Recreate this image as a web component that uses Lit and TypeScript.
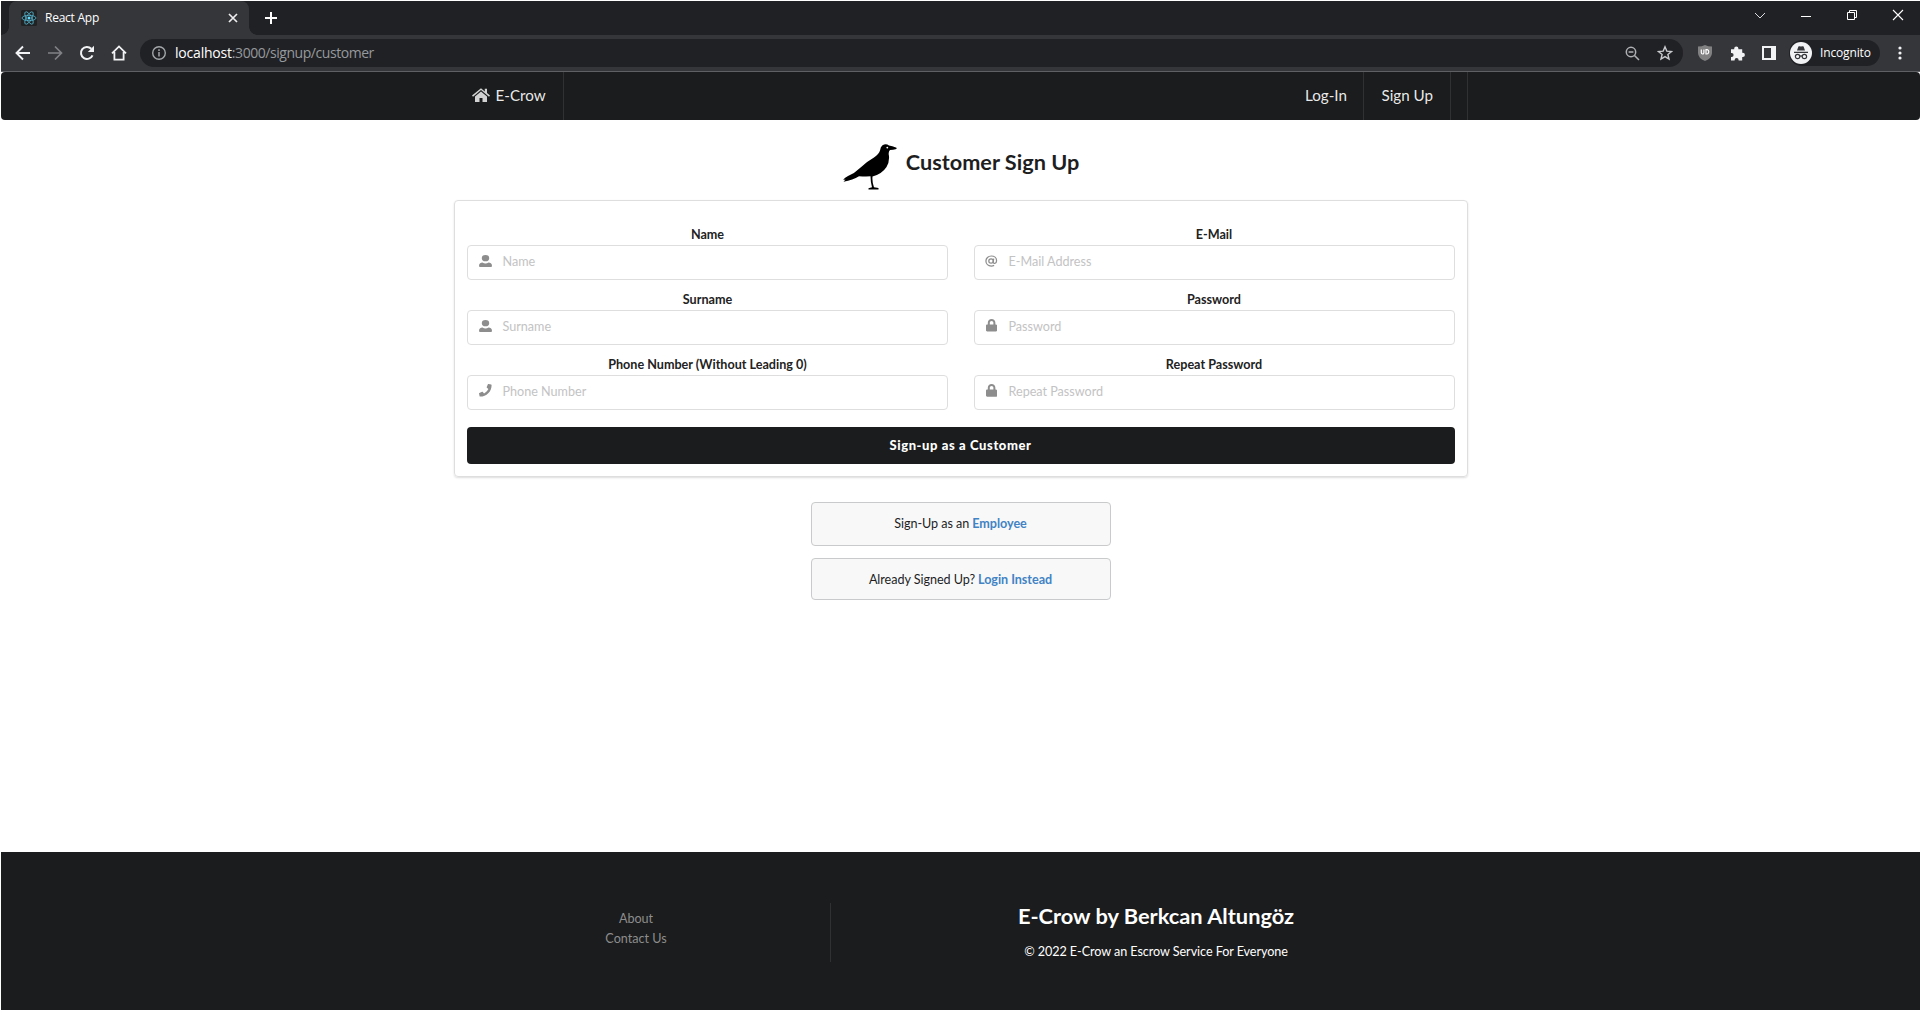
import { LitElement, html, svg, css } from "lit";
import { customElement } from "lit/decorators.js";

const USER = svg`<path d="M96 128a128 128 0 1 0 256 0A128 128 0 1 0 96 128zM0 448q0-80 40-112q30-26 80-32q50 38 104 38t104-38q50 6 80 32q40 32 40 112q0 42-38 42H38q-38 0-38-42z"/>`;
const PHONE = svg`<path d="M493.4 24.6l-104-24c-11.3-2.6-22.9 3.3-27.5 13.9l-48 112c-4.2 9.8-1.4 21.3 6.9 28l60.6 49.6c-36 76.7-98.9 140.5-177.2 177.2l-49.6-60.6c-6.8-8.3-18.2-11.1-28-6.9l-112 48C3.9 366.5-2 378.1.6 389.4l24 104C27.1 504.2 36.7 512 48 512c256.1 0 464-207.5 464-464 0-11.2-7.7-20.9-18.6-23.4z"/>`;
const LOCK = svg`<path d="M400 224h-24v-72C376 68.2 307.8 0 224 0S72 68.2 72 152v72H48c-26.5 0-48 21.5-48 48v192c0 26.500 21.500 48 48 48h352c26.500 0 48-21.500 48-48V272c0-26.500-21.500-48-48-48zm-104 0H152v-72c0-39.700 32.300-72 72-72s72 32.300 72 72v72z"/>`;
const AT = svg`<g fill="none" stroke="currentColor" stroke-width="52"><circle cx="248" cy="256" r="92"/><path d="M356 154l-20 132c-8 60 28 82 64 74c48-10 74-58 74-112c0-124-98-206-218-206C132 42 38 138 38 258c0 122 94 212 218 212c46 0 82-10 118-28"/></g>`;

interface FieldSpec { label: string; hint: string; icon: unknown; box: string; w: number; h: number }

const FIELDS: FieldSpec[] = [
  { label: "Name", hint: "Name", icon: USER, box: "0 0 448 490", w: 13, h: 12 },
  { label: "E-Mail", hint: "E-Mail Address", icon: AT, box: "0 0 512 512", w: 12.5, h: 12 },
  { label: "Surname", hint: "Surname", icon: USER, box: "0 0 448 490", w: 13, h: 12 },
  { label: "Password", hint: "Password", icon: LOCK, box: "0 0 448 512", w: 11.2, h: 12.4 },
  { label: "Phone Number (Without Leading 0)", hint: "Phone Number", icon: PHONE, box: "0 0 512 512", w: 12.6, h: 12.6 },
  { label: "Repeat Password", hint: "Repeat Password", icon: LOCK, box: "0 0 448 512", w: 11.2, h: 12.8 },
];

@customElement("browser-chrome")
export class BrowserChrome extends LitElement {
  static styles = css`
    :host { display: block; font-family: "Open Sans", sans-serif; color: #fff; }
    svg { display: block; flex: none; }
    .strip { display: flex; height: 34px; background: #202124; align-items: stretch; }
    .tab { position: relative; width: 240px; margin-left: 8px; box-sizing: border-box; display: flex; align-items: center; padding: 0 10px 0 12px; background: #35363a; border-radius: 8px 8px 0 0; font-size: 12px; }
    .tab::before, .tab::after { content: ""; position: absolute; bottom: 0; width: 8px; height: 8px; }
    .tab::before { left: -8px; background: radial-gradient(circle at 0 0, #202124 7.500px, #35363a 8px); }
    .tab::after { right: -8px; background: radial-gradient(circle at 100% 0, #202124 7.500px, #35363a 8px); }
    .title { flex: 1; margin-left: 8px; letter-spacing: -0.25px; padding-bottom: 1px; }
    .plus { align-self: center; margin-left: 16px; }
    .window { margin-left: auto; display: flex; align-items: center; gap: 34px; padding: 0 16px 6px 0; }
    .bar { display: flex; height: 36px; background: #35363a; border-bottom: 1px solid #5f6063; align-items: center; }
    .nav { display: flex; gap: 16px; padding-left: 14px; }
    .url { margin-left: 13px; width: 1543px; height: 28px; box-sizing: border-box; background: #202124; border-radius: 14px; display: flex; align-items: center; padding: 0 10px 0 12px; font-size: 14px; }
    .addr { margin-left: 9px; flex: 1; color: #96999d; letter-spacing: -0.45px; padding-bottom: 1px; }
    .host { color: #fff; letter-spacing: -0.2px; }
    .star { margin-left: 17px; }
    .ext { display: flex; gap: 18px; margin-left: 15px; align-items: center; }
    .ext svg + svg { margin-left: -0.500px; }
    .incog { margin-left: 13px; width: 91px; height: 26px; box-sizing: border-box; border-radius: 13px; background: #202124; display: flex; align-items: center; padding-left: 1px; font-size: 12px; }
    .incog span { margin-left: 8px; letter-spacing: -0.15px; padding-bottom: 1px; }
    .dots { margin-left: 18px; }
  `;

  render() {
    return html`
      <div class="strip">
        <div class="tab">
          <svg width="16" height="16" viewBox="0 0 16 16"><rect width="16" height="16" rx="1.500" fill="#202224"/><g fill="none" stroke="#61dafb" stroke-width=".8" opacity=".8"><ellipse cx="8" cy="8" rx="7" ry="2.700"/><ellipse cx="8" cy="8" rx="7" ry="2.700" transform="rotate(60 8 8)"/><ellipse cx="8" cy="8" rx="7" ry="2.700" transform="rotate(120 8 8)"/></g><circle cx="8" cy="8" r="1.500" fill="#61dafb"/></svg>
          <span class="title">React App</span>
          <svg width="12" height="12" viewBox="0 0 12 12"><path d="M2 2l8 8M10 2l-8 8" stroke="#eee" stroke-width="1.700"/></svg>
        </div>
        <svg class="plus" width="12" height="12" viewBox="0 0 12 12"><path d="M6 0v12M0 6h12" stroke="#fff" stroke-width="2"/></svg>
        <div class="window">
          <svg width="12" height="12" viewBox="0 0 12 12"><path d="M1 4l5 5 5-5" fill="none" stroke="#ddd"/></svg>
          <svg width="12" height="12" viewBox="0 0 12 12"><path d="M1 7.500h10" stroke="#fff"/></svg>
          <svg width="12" height="12" viewBox="0 0 12 12"><path d="M3.500 3V1.500h7v7H9M1.500 3.500h7v7h-7z" fill="none" stroke="#fff"/></svg>
          <svg width="12" height="12" viewBox="0 0 12 12"><path d="M1 1l10 10M11 1L1 11" stroke="#fff" stroke-width="1.100"/></svg>
        </div>
      </div>
      <div class="bar">
        <div class="nav">
          <svg width="16" height="16" viewBox="0 0 16 16" fill="none" stroke="#f1f3f4" stroke-width="1.900"><path d="M15 8H2.500M8 1.500L1.500 8 8 14.500"/></svg>
          <svg width="16" height="16" viewBox="0 0 16 16" fill="none" stroke="#818286" stroke-width="1.700"><path d="M1 8h12.500M8 1.500L14.500 8 8 14.500"/></svg>
          <svg width="16" height="16" viewBox="0 0 16 16"><path d="M13.500 10.300A6 6 0 1 1 12.300 3.800" fill="none" stroke="#f1f3f4" stroke-width="2"/><path d="M15 .800V7H8.800z" fill="#f1f3f4"/></svg>
          <svg width="16" height="16" viewBox="0 0 16 16" fill="none" stroke="#f1f3f4" stroke-width="1.800"><path d="M1 8.300L8 1.400l7 6.900M3.400 7v7.700h9.200V7"/></svg>
        </div>
        <div class="url">
          <svg width="14" height="14" viewBox="0 0 14 14"><circle cx="7" cy="7" r="6.300" fill="none" stroke="#a4a7ab" stroke-width="1.400"/><path d="M7 6v4.500M7 3.300v1.600" stroke="#a4a7ab" stroke-width="1.500"/></svg>
          <span class="addr"><span class="host">localhost</span>:3000/signup/customer</span>
          <svg width="15" height="15" viewBox="0 0 15 15" fill="none" stroke="#aeb0b3" stroke-width="1.500"><circle cx="6" cy="6" r="4.700"/><path d="M9.500 9.500L14 14M3.600 6h4.800"/></svg>
          <svg class="star" width="16" height="16" viewBox="0 0 16 16"><path d="M8 1.800l1.800 4.300 4.700.4-3.600 3 1.100 4.600L8 11.600l-4 2.500 1.100-4.600-3.600-3 4.700-.4z" fill="none" stroke="#c8cacd" stroke-width="1.400"/></svg>
        </div>
        <div class="ext">
          <svg width="14" height="16" viewBox="0 0 14 16"><path d="M7 0q3 1.500 7 1.500V8q0 5-7 8Q0 13 0 8V1.500Q4 1.500 7 0z" fill="#818181"/><path d="M3.300 4.500v3q0 1.500 1.300 1.500t1.300-1.500v-3M8 4v5h1.200a2 2.200 0 0 0 0-4.300H8" fill="none" stroke="#fff" stroke-width="1.200"/></svg>
          <svg width="15" height="15" viewBox="0 0 15 15"><path d="M1 3.200h3.200v-.7a2.100 2.100 0 0 1 4.200 0v.7h3.800v3.600h.6a2.100 2.100 0 0 1 0 4.200h-.6v3.600H8.600V14a2 2 0 0 0-4 0v.6H1V11h.6a2 2 0 0 0 0-4H1z" fill="#f1f3f4"/></svg>
          <svg width="14" height="14" viewBox="0 0 14 14"><path d="M0 0h14v14H0zM2 2v10h7V2z" fill="#f1f3f4" fill-rule="evenodd"/></svg>
        </div>
        <div class="incog">
          <svg width="22" height="22" viewBox="0 0 22 22"><circle cx="11" cy="11" r="11" fill="#f1f3f4"/><path d="M7 8.500L8.400 4.600q.3-.6 1-.4l1.600.4 1.600-.4q.7-.2 1 .4L15 8.500zM4 9.800h14v1.100H4z" fill="#35363a"/><g fill="none" stroke="#35363a" stroke-width="1.200"><circle cx="7.600" cy="14.500" r="2.200"/><circle cx="14.400" cy="14.500" r="2.200"/><path d="M9.800 14.200q1.200-.8 2.400 0"/></g></svg>
          <span>Incognito</span>
        </div>
        <svg class="dots" width="4" height="16" viewBox="0 0 4 16" fill="#f1f3f4"><circle cx="2" cy="3" r="1.600"/><circle cx="2" cy="8" r="1.600"/><circle cx="2" cy="13" r="1.600"/></svg>
      </div>`;
  }
}

@customElement("app-root")
export class AppRoot extends LitElement {
  static styles = css`
    :host { display: flex; flex-direction: column; box-sizing: border-box; width: 1920px; height: 1010px; padding: 1px 0 0 1px; background: #fff; overflow: hidden; font-family: Lato, sans-serif; font-size: 12.600px; color: #1e1e1f; }
    svg { display: block; flex: none; }
    browser-chrome { flex: none; }
    .menu { height: 48px; flex: none; background: #1b1c1d; border-radius: 4px; display: flex; justify-content: center; }
    .inner { width: 1014px; display: flex; color: rgba(255,255,255,.92); font-size: 15.200px; box-sizing: border-box; border-right: 1px solid #303132; padding-right: 16px; }
    .item { display: flex; align-items: center; box-sizing: border-box; border-right: 1px solid #303132; padding: 0 16.500px 2px 17px; }
    .brand { padding-left: 18px; padding-right: 14px; width: 110px; gap: 6px; white-space: nowrap; }
    .brand svg { color: #d2d2d2; }
    .login { margin-left: auto; }
    .head { display: flex; justify-content: center; height: 80px; flex: none; padding-left: 1px; }
    .crow { margin-top: 24px; width: 54px; height: 46px; }
    h2 { margin: 28px 0 0 9px; font-size: 21.700px; line-height: 28px; font-weight: 700; }
    .segment { align-self: center; width: 1014px; height: 277px; flex: none; box-sizing: border-box; border: 1px solid #dededf; border-radius: 4px; box-shadow: 0 1px 2px rgba(34,36,38,.15); padding: 25px 12px 0; }
    .fields { display: grid; grid-template-columns: 481px 481px; column-gap: 26px; }
    .field { height: 65px; display: flex; flex-direction: column; }
    label { height: 19px; line-height: 18px; text-align: center; font-weight: 700; font-size: 12.600px; color: #222; }
    .input { height: 35px; box-sizing: border-box; border: 1px solid #dededf; border-radius: 4px; display: flex; align-items: center; color: #c3c3c4; padding-bottom: 2px; }
    .icon { width: 34px; display: flex; justify-content: center; color: #8d8d8e; padding-bottom: 2px; box-sizing: border-box; }
    .field:nth-child(odd) label { padding-left: 1px; }
    .field:nth-child(odd) .input { padding-left: 1px; }
    .submit { display: block; width: 988px; height: 37px; margin-top: 6px; border: 0; border-radius: 4px; background: #1b1c1d; color: #fff; font: 900 13px Lato, sans-serif; letter-spacing: 0.600px; padding: 0 0 2px; }
    .note { align-self: center; flex: none; width: 300px; height: 44px; box-sizing: border-box; border: 1px solid #c9cacb; border-radius: 4px; background: #f8f8f9; margin-top: 25px; display: flex; align-items: center; justify-content: center; gap: 3px; padding-bottom: 1px; letter-spacing: -0.040px; }
    .note.second { margin-top: 12px; height: 42px; padding-bottom: 0; }
    .note b { color: #4183c4; }
    footer { margin-top: auto; height: 158px; flex: none; box-sizing: border-box; background: #1b1c1d; display: flex; padding: 51px 0 0 440px; }
    .links { width: 390px; height: 59px; box-sizing: border-box; border-right: 1px solid #303132; padding: 6px 0 0 1px; text-align: center; line-height: 20px; color: #8d8d8e; }
    .about { width: 650px; text-align: center; color: #fff; }
    h3 { margin: 0; font-size: 21.800px; line-height: 26px; font-weight: 700; }
    .about p { margin: 14px 0 0; line-height: 18px; letter-spacing: -0.060px; }
  `;

  render() {
    return html`
      <browser-chrome></browser-chrome>
      <nav class="menu"><div class="inner">
        <div class="item brand">
          <svg width="18" height="15" viewBox="0 0 18 15" fill="currentColor"><path d="M9 3.500L3 8.600V14h4.500v-4h3v4H15V8.600zM9 .3L0 7.600l1 1.100 8-6.600 8 6.600 1-1.100-3-2.500V.7h-2.200v2.700z"/></svg>
          <span>E-Crow</span>
        </div>
        <div class="item login">Log-In</div>
        <div class="item">Sign Up</div>
      </div></nav>
      <div class="head">
        <svg class="crow" viewBox="0 0 54 46"><path d="M53.500 3.800Q49 1.800 46 1.500Q43-.8 39.500 1.200Q37.500 2.500 37 6.500Q36 10 31 13.500Q23 18 17 24Q12 29 5 32Q1 34 .2 36L2.500 35.600L.5 37.800Q10 36 16 32.200Q22 32.500 27.500 32.300Q27.500 38 29 43.200L25.500 44.200V45.600H35.500V44L31 43.300Q29 38 29.500 32.500Q39 30 43.500 23Q46.500 18 46 12Q45 8 47 6Q50 6 53.500 5z"/><circle cx="44.300" cy="3.600" r=".9" fill="#fff"/></svg>
        <h2>Customer Sign Up</h2>
      </div>
      <section class="segment">
        <div class="fields">
          ${FIELDS.map((f) => html`<div class="field">
            <label>${f.label}</label>
            <div class="input"><span class="icon"><svg width=${f.w} height=${f.h} viewBox=${f.box} preserveAspectRatio="none" fill="currentColor">${f.icon}</svg></span><span>${f.hint}</span></div>
          </div>`)}
        </div>
        <button class="submit">Sign-up as a Customer</button>
      </section>
      <div class="note"><span>Sign-Up as an</span><b>Employee</b></div>
      <div class="note second"><span>Already Signed Up?</span><b>Login Instead</b></div>
      <footer>
        <div class="links">About<br>Contact Us</div>
        <div class="about"><h3>E-Crow by Berkcan Altungöz</h3><p>© 2022 E-Crow an Escrow Service For Everyone</p></div>
      </footer>`;
  }
}
